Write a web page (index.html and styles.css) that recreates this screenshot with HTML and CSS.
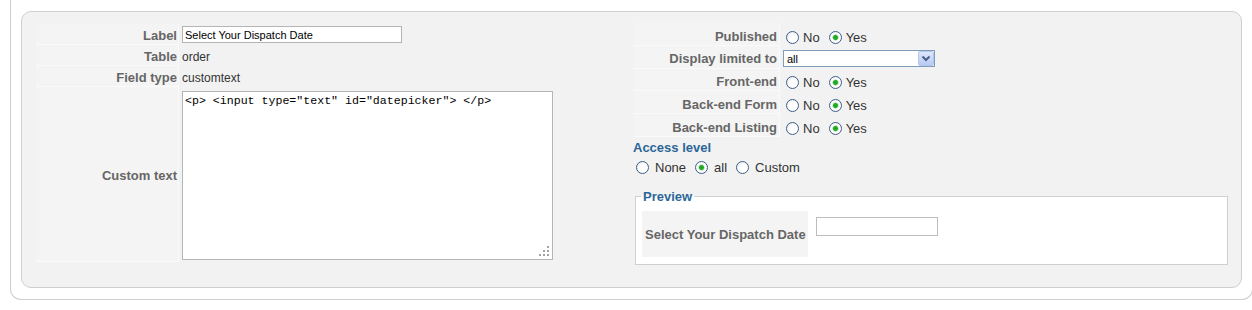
FILE: index.html
```html
<!DOCTYPE html>
<html>
<head>
<meta charset="utf-8">
<link rel="stylesheet" href="styles.css">
</head>
<body>
<div class="outer">
  <div class="panel">
    <div class="col col-left">
      <div class="grid grid-left">
        <div class="key lkey">Label</div>
        <div class="val"><input class="txt txt-label" type="text" value="Select Your Dispatch Date"></div>
        <div class="key lkey">Table</div>
        <div class="val lval">order</div>
        <div class="key lkey">Field type</div>
        <div class="val lval">customtext</div>
        <div class="key lkey">Custom text</div>
        <div class="val val-top">
          <div class="ta-wrap">
            <textarea class="ta">&lt;p&gt; &lt;input type="text" id="datepicker"&gt; &lt;/p&gt;</textarea>
            <svg class="grip" width="12" height="12" viewBox="0 0 12 12">
              <rect x="9" y="1" width="2" height="2" fill="#a3a3a3"/>
              <rect x="5" y="5" width="2" height="2" fill="#a3a3a3"/>
              <rect x="9" y="5" width="2" height="2" fill="#a3a3a3"/>
              <rect x="1" y="9" width="2" height="2" fill="#a3a3a3"/>
              <rect x="5" y="9" width="2" height="2" fill="#a3a3a3"/>
              <rect x="9" y="9" width="2" height="2" fill="#a3a3a3"/>
            </svg>
          </div>
        </div>
      </div>
    </div>
    <div class="col col-right">
      <div class="grid grid-right">
        <div class="key rkey">Published</div>
        <div class="val rval">
          <input class="radio" type="radio" name="pub"><span class="opt">No</span>
          <input class="radio" type="radio" name="pub" checked><span class="opt">Yes</span>
        </div>
        <div class="key rkey rkey-sel">Display limited to</div>
        <div class="val rval rval-sel">
          <span class="sel-wrap">
            <select class="sel"><option>all</option></select>
            <svg class="sel-btn" width="16" height="15" viewBox="0 0 16 15">
              <defs>
                <linearGradient id="bg" x1="0" y1="0" x2="0" y2="1">
                  <stop offset="0" stop-color="#dfe8fb"/>
                  <stop offset="1" stop-color="#b6c9f3"/>
                </linearGradient>
              </defs>
              <rect x="0.5" y="0.5" width="15" height="14" rx="1.5" fill="url(#bg)" stroke="#b4c6ee"/>
              <path d="M4.5 5.5 L8 9 L11.5 5.5" fill="none" stroke="#4a5f86" stroke-width="2"/>
            </svg>
          </span>
        </div>
        <div class="key rkey">Front-end</div>
        <div class="val rval">
          <input class="radio" type="radio" name="fe"><span class="opt">No</span>
          <input class="radio" type="radio" name="fe" checked><span class="opt">Yes</span>
        </div>
        <div class="key rkey">Back-end Form</div>
        <div class="val rval">
          <input class="radio" type="radio" name="bf"><span class="opt">No</span>
          <input class="radio" type="radio" name="bf" checked><span class="opt">Yes</span>
        </div>
        <div class="key rkey">Back-end Listing</div>
        <div class="val rval">
          <input class="radio" type="radio" name="bl"><span class="opt">No</span>
          <input class="radio" type="radio" name="bl" checked><span class="opt">Yes</span>
        </div>
      </div>
      <div class="access">
        <div class="access-title">Access level</div>
        <div class="access-radios">
          <input class="radio" type="radio" name="acc"><span class="opt">None</span>
          <input class="radio" type="radio" name="acc" checked><span class="opt">all</span>
          <input class="radio" type="radio" name="acc"><span class="opt">Custom</span>
        </div>
      </div>
      <fieldset class="preview">
        <legend>Preview</legend>
        <div class="preview-row">
          <div class="pkey">Select Your Dispatch Date</div>
          <input class="txt txt-prev" type="text">
        </div>
      </fieldset>
    </div>
  </div>
</div>
</body>
</html>
```

FILE: styles.css
```css
* { box-sizing: border-box; }
html, body {
  margin: 0;
  padding: 0;
  overflow: hidden;
  background: #fff;
}
body {
  width: 1252px;
  height: 310px;
  font-family: "Liberation Sans", Arial, sans-serif;
  font-size: 12px;
  color: #333;
}

.outer {
  margin-left: 10px;
  width: 1243px;
  border: 1px solid #cfcfcf;
  border-top: 0;
  border-radius: 0 0 11px 11px;
  padding: 11px 10px 11px 10px;
}

.panel {
  display: flex;
  height: 277px;
  border: 1px solid #cfcfcf;
  border-radius: 10px;
  background: #f2f2f2;
  padding: 12px 13px 0 14px;
}

.col-left { width: 595px; flex: none; }
.col-right { flex: 1; margin-top: -1px; }

.grid { display: grid; }
.grid-left {
  grid-template-columns: 143px 1fr;
  grid-template-rows: 21px 21px 21px 175px;
}
.grid-right {
  grid-template-columns: 147px 1fr;
  grid-template-rows: 23px 23px 22px 23px 23px;
  margin-left: 2px;
}

.key {
  display: flex;
  align-items: center;
  justify-content: flex-end;
  padding-right: 1px;
  background: #f4f4f4;
  border-right: 1px solid #fafafa;
  border-bottom: 1px solid #fafafa;
  color: #666;
  font-weight: bold;
  font-size: 13px;
  white-space: nowrap;
}
.val {
  display: flex;
  align-items: center;
  padding-left: 3px;
  white-space: nowrap;
}
.lkey, .lval { padding-top: 2px; }
.val-top { align-items: flex-start; padding-top: 4px; }

.rkey { padding-top: 4px; padding-right: 2px; }
.rval { padding-top: 5px; }
.rkey-sel, .rval-sel { padding-top: 2px; }

.txt {
  border: 1px solid #b5b5b5;
  background: #fff;
  margin: 0;
  padding: 0 2px;
  font-family: "Liberation Sans", Arial, sans-serif;
  font-size: 11px;
  color: #000;
  outline: none;
}
.txt-label { width: 220px; height: 17px; }
.txt-prev { width: 122px; height: 19px; margin: 6px 0 0 8px; border-color: #bdbdbd; }

.ta-wrap { position: relative; width: 371px; height: 169px; }
.ta {
  display: block;
  width: 371px;
  height: 169px;
  margin: 0;
  border: 1px solid #b5b5b5;
  padding: 2px 2px;
  resize: none;
  font-family: "Liberation Mono", "Courier New", monospace;
  font-size: 11.6px;
  line-height: 14px;
  color: #000;
  background: #fff;
  outline: none;
}
.grip { position: absolute; right: 3px; bottom: 3px; }

.radio {
  appearance: none;
  -webkit-appearance: none;
  width: 13px;
  height: 13px;
  margin: 0 4px 0 3px;
  border: 1px solid #3d5f88;
  border-radius: 50%;
  background: radial-gradient(circle at 60% 60%, #ffffff 0, #ffffff 40%, #e4e4e4 100%);
  flex: none;
}
.radio:checked {
  background: radial-gradient(circle, #22a822 0, #22a822 2px, #8fd48f 2.6px, #ffffff 3.4px, #f4f4f4 100%);
}
.opt { margin-right: 6px; font-size: 13px; color: #333; }

.sel-wrap { position: relative; display: inline-block; height: 17px; }
.sel {
  appearance: none;
  -webkit-appearance: none;
  display: block;
  width: 152px;
  height: 17px;
  margin: 0;
  border: 1px solid #7f9db9;
  border-radius: 0;
  background: #fff;
  padding: 0 0 0 3px;
  font-family: "Liberation Sans", Arial, sans-serif;
  font-size: 11px;
  color: #000;
  outline: none;
}
.sel-btn { position: absolute; right: 1px; top: 1px; pointer-events: none; }

.access { padding: 3px 0 0 2px; }
.access-title {
  color: #2b6698;
  font-weight: bold;
  font-size: 13px;
  line-height: 15px;
}
.access-radios {
  display: flex;
  align-items: center;
  height: 18px;
  margin-top: 3px;
  padding-left: 0;
}
.access-radios .opt { margin-left: 2px; margin-right: 6px; }

.preview {
  margin: 13px 0 0 4px;
  border: 1px solid #cfcfcf;
  background: #fff;
  padding: 7px 6px 7px 6px;
  min-width: 0;
}
.preview legend {
  color: #2b6698;
  font-weight: bold;
  font-size: 13px;
  line-height: 15px;
  padding: 0 2px;
  margin-left: -1px;
}
.preview-row { display: flex; align-items: flex-start; }
.pkey {
  display: flex;
  align-items: center;
  height: 46px;
  padding: 0 2px 0 3px;
  background: #f4f4f4;
  color: #666;
  font-weight: bold;
  font-size: 13px;
  white-space: nowrap;
}
```
